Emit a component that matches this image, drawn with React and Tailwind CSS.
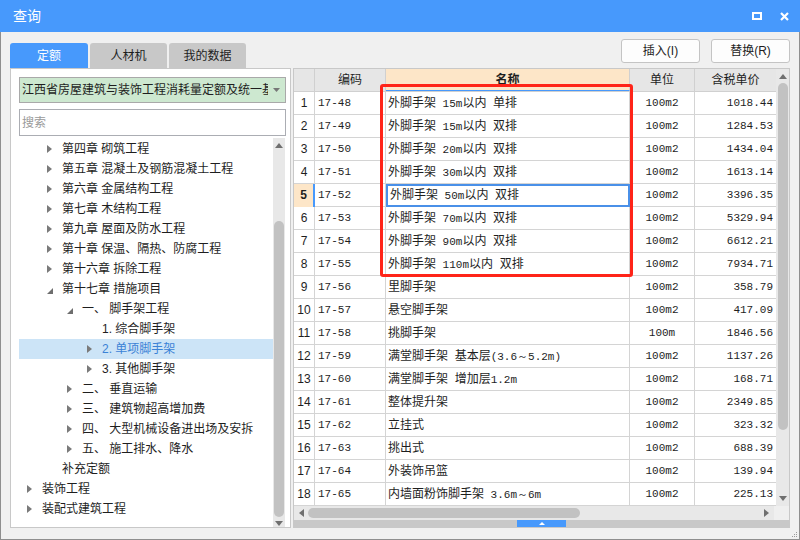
import React from "react";
import clsx from "clsx";

const tree = [
  { lv: 1, ic: "r", t: "第四章 砌筑工程" },
  { lv: 1, ic: "r", t: "第五章 混凝土及钢筋混凝土工程" },
  { lv: 1, ic: "r", t: "第六章 金属结构工程" },
  { lv: 1, ic: "r", t: "第七章 木结构工程" },
  { lv: 1, ic: "r", t: "第九章 屋面及防水工程" },
  { lv: 1, ic: "r", t: "第十章 保温、隔热、防腐工程" },
  { lv: 1, ic: "r", t: "第十六章 拆除工程" },
  { lv: 1, ic: "d", t: "第十七章 措施项目" },
  { lv: 2, ic: "d", t: "一、 脚手架工程" },
  { lv: 3, ic: "", t: "1. 综合脚手架" },
  { lv: 3, ic: "r", t: "2. 单项脚手架", sel: true },
  { lv: 3, ic: "r", t: "3. 其他脚手架" },
  { lv: 2, ic: "r", t: "二、 垂直运输" },
  { lv: 2, ic: "r", t: "三、 建筑物超高增加费" },
  { lv: 2, ic: "r", t: "四、 大型机械设备进出场及安拆" },
  { lv: 2, ic: "r", t: "五、 施工排水、降水" },
  { lv: 1, ic: "", t: "补充定额" },
  { lv: 0, ic: "r", t: "装饰工程" },
  { lv: 0, ic: "r", t: "装配式建筑工程" },
];

const pads = ["pl-[8px]", "pl-[28px]", "pl-[48px]", "pl-[68px]"];

const rows = [
  ["17-48", "外脚手架 15m以内 单排", "100m2", "1018.44"],
  ["17-49", "外脚手架 15m以内 双排", "100m2", "1284.53"],
  ["17-50", "外脚手架 20m以内 双排", "100m2", "1434.04"],
  ["17-51", "外脚手架 30m以内 双排", "100m2", "1613.14"],
  ["17-52", "外脚手架 50m以内 双排", "100m2", "3396.35"],
  ["17-53", "外脚手架 70m以内 双排", "100m2", "5329.94"],
  ["17-54", "外脚手架 90m以内 双排", "100m2", "6612.21"],
  ["17-55", "外脚手架 110m以内 双排", "100m2", "7934.71"],
  ["17-56", "里脚手架", "100m2", "358.79"],
  ["17-57", "悬空脚手架", "100m2", "417.09"],
  ["17-58", "挑脚手架", "100m", "1846.56"],
  ["17-59", "满堂脚手架 基本层(3.6～5.2m)", "100m2", "1137.26"],
  ["17-60", "满堂脚手架 增加层1.2m", "100m2", "168.71"],
  ["17-61", "整体提升架", "100m2", "2349.85"],
  ["17-62", "立挂式", "100m2", "323.32"],
  ["17-63", "挑出式", "100m2", "688.39"],
  ["17-64", "外装饰吊篮", "100m2", "139.94"],
  ["17-65", "内墙面粉饰脚手架 3.6m～6m", "100m2", "225.13"],
];

const cols = "grid grid-cols-[21px_71px_244px_65px_81px]";

// ascii parts of the name render narrower, like the bitmap font in the original
function Name({ text }) {
  return (
    <span className="whitespace-pre">
      {text.split(/([\x20-\x7e～]+)/).map((p, i) =>
        /^[\x20-\x7e～]+$/.test(p) ? (
          <span key={i} className="font-['Liberation_Mono',monospace] text-[11px]">{p}</span>
        ) : (
          <span key={i}>{p}</span>
        )
      )}
    </span>
  );
}

function Tri({ ic }) {
  if (ic === "r")
    return (
      <svg width="5" height="8" viewBox="0 0 5 8"><polygon points="0,0 5,4 0,8" fill="#7a7a7a" /></svg>
    );
  if (ic === "d")
    return (
      <svg width="6" height="6" viewBox="0 0 6 6" className="mt-[3px]"><polygon points="6,0 6,6 0,6" fill="#6e6e6e" /></svg>
    );
  return null;
}

export default function App() {
  return (
    <div className="w-[800px] h-[540px] flex flex-col font-['Liberation_Sans','Noto_Sans_CJK_SC',sans-serif] text-[12px] text-[#1e1e1e] select-none">
      {/* title bar */}
      <div className="h-[32px] shrink-0 bg-[#4799fc] flex items-center pl-[13px] pr-[10px]">
        <span className="text-white text-[14px] flex-1">查询</span>
        <div className="w-[10px] h-[8px] border-2 border-white mr-[18px]" />
        <svg width="9" height="9" viewBox="0 0 9 9" className="mr-[1px]">
          <path d="M1 1L8 8M8 1L1 8" stroke="white" strokeWidth="2.2" />
        </svg>
      </div>

      <div className="flex-1 flex flex-col bg-[#f0f0f0] border-x border-b border-[#8e8e8e] relative">
        {/* tabs + buttons */}
        <div className="h-[36px] shrink-0 flex justify-between px-[9px]">
          <div className="flex items-end gap-[2px]">
            <div className="w-[78px] h-[25px] rounded-t-[3px] bg-[#4799fc] text-white flex items-center justify-center">定额</div>
            <div className="w-[77px] h-[25px] rounded-t-[3px] bg-[#c8c8c8] flex items-center justify-center">人材机</div>
            <div className="w-[77px] h-[25px] rounded-t-[3px] bg-[#c8c8c8] flex items-center justify-center">我的数据</div>
          </div>
          <div className="flex gap-[11px] pt-[7px]">
            <button className="w-[79px] h-[24px] bg-[#fdfdfd] border border-[#c4c4c4] rounded-[3px]">插入(I)</button>
            <button className="w-[79px] h-[24px] bg-[#fdfdfd] border border-[#c4c4c4] rounded-[3px]">替换(R)</button>
          </div>
        </div>

        <div className="h-[460px] shrink-0 flex gap-[2px] px-[9px]">
          {/* left panel */}
          <div className="w-[281px] bg-white border border-[#c8c8c8] flex flex-col">
            <div className="mt-[8px] ml-[8px] w-[267px] h-[26px] bg-[#cde8d0] border border-[#a9a9a9] flex items-center pl-[2px]">
              <span className="flex-1 overflow-hidden whitespace-nowrap">江西省房屋建筑与装饰工程消耗量定额及统一基价表</span>
              <svg width="7" height="4" viewBox="0 0 7 4" className="mx-[5px] shrink-0"><polygon points="0,0 7,0 3.5,4" fill="#777" /></svg>
            </div>
            <div className="mt-[6px] ml-[8px] w-[267px] h-[27px] border border-[#abadb3] flex items-center pl-[2px] text-[#9a9a9a]">搜索</div>
            <div className="mt-[2px] flex-1 flex min-h-0">
              <div className="flex-1 pl-[8px] pt-[1px] overflow-hidden">
                {tree.map((n, i) => (
                  <div key={i} className={clsx("h-[20px] flex items-center whitespace-nowrap", pads[n.lv], n.sel && "bg-[#cce4f7] text-[#3b82d6]")}>
                    <span className="w-[15px] shrink-0 flex items-center"><Tri ic={n.ic} /></span>
                    <span>{n.t}</span>
                  </div>
                ))}
              </div>
              <div className="w-[12px] mr-[5px] bg-[#e8e8e8] flex flex-col items-center">
                <svg width="8" height="5" viewBox="0 0 8 5" className="mt-[5px]"><polygon points="0,5 8,5 4,0" fill="#6f6f6f" /></svg>
                <div className="w-[10px] mt-[73px] h-[296px] rounded-full bg-[#c2c2c2]" />
                <svg width="8" height="5" viewBox="0 0 8 5" className="mt-[4px]"><polygon points="0,0 8,0 4,5" fill="#6f6f6f" /></svg>
              </div>
            </div>
          </div>

          {/* right table */}
          <div className="w-[497px] border border-[#c8c8c8] bg-white flex flex-col relative">
            <div className="flex h-[437px]">
              <div className="w-[482px]">
                <div className={clsx(cols, "h-[23px] bg-[#e6e6e6] border-b border-[#d0d0d0] text-center")}>
                  <div className="border-r border-[#d0d0d0]" />
                  <div className="border-r border-[#d0d0d0] flex items-center justify-center">编码</div>
                  <div className="border-r border-[#d0d0d0] bg-[#fde6c8] border-b border-b-[#4799fc] flex items-center justify-center font-bold">名称</div>
                  <div className="border-r border-[#d0d0d0] flex items-center justify-center">单位</div>
                  <div className="flex items-center justify-center">含税单价</div>
                </div>
                {rows.map((r, i) => {
                  const sel = i === 4;
                  return (
                    <div key={i} className={clsx(cols, "h-[23px] border-b border-[#d4d4d4]")}>
                      <div className={clsx("border-r flex items-center justify-center", sel ? "bg-[#fde6c8] font-bold border-[#4799fc] border-r-2" : "border-[#d4d4d4]")}>{i + 1}</div>
                      <div className="border-r border-[#d4d4d4] flex items-center pl-[3px] font-['Liberation_Mono',monospace] text-[11px]">{r[0]}</div>
                      <div className={clsx("flex items-center pl-[2px] whitespace-nowrap", sel ? "border-2 border-[#4a90e8]" : "border-r border-[#d4d4d4]")}>
                        <Name text={r[1]} />
                      </div>
                      <div className="border-r border-[#d4d4d4] flex items-center justify-center font-['Liberation_Mono',monospace] text-[11px]">{r[2]}</div>
                      <div className="flex items-center justify-end pr-[3px] font-['Liberation_Mono',monospace] text-[11px]">{r[3]}</div>
                    </div>
                  );
                })}
              </div>
              <div className="w-[15px] bg-[#e8e8e8] flex flex-col items-center">
                <svg width="8" height="5" viewBox="0 0 8 5" className="mt-[5px]"><polygon points="0,5 8,5 4,0" fill="#6f6f6f" /></svg>
                <div className="w-[10px] mt-[4px] h-[347px] rounded-full bg-[#c2c2c2]" />
                <svg width="8" height="5" viewBox="0 0 8 5" className="mt-[66px]"><polygon points="0,0 8,0 4,5" fill="#6f6f6f" /></svg>
              </div>
            </div>
            <div className="h-[14px] flex items-center bg-[#e8e8e8]">
              <svg width="5" height="8" viewBox="0 0 5 8" className="ml-[5px]"><polygon points="5,0 5,8 0,4" fill="#6f6f6f" /></svg>
              <div className="ml-[4px] w-[272px] h-[10px] rounded-full bg-[#c2c2c2]" />
              <div className="flex-1" />
              <svg width="5" height="8" viewBox="0 0 5 8" className="mr-[5px]"><polygon points="0,0 5,4 0,8" fill="#6f6f6f" /></svg>
              <div className="w-[15px] h-full bg-[#efefef]" />
            </div>
            <div className="h-[7px] bg-[#c8c8c8] flex justify-center">
              <div className="w-[49px] h-full bg-[#4799fc] flex items-center justify-center">
                <svg width="6" height="3" viewBox="0 0 6 3"><polygon points="0,3 6,3 3,0" fill="white" /></svg>
              </div>
            </div>

            {/* red highlight box */}
            <div className="absolute left-[86px] top-[15px] w-[253px] h-[193px] border-[3px] border-[#ff2418] rounded-[3px] pointer-events-none" />
          </div>
        </div>

        {/* resize grip */}
        <div className="absolute right-[2px] bottom-[2px] grid grid-cols-3 gap-[1px]">
          {[0, 0, 1, 0, 1, 1, 1, 1, 1].map((v, i) => (
            <div key={i} className={clsx("w-[1px] h-[1px]", v ? "bg-[#9a9a9a]" : "")} />
          ))}
        </div>
      </div>
    </div>
  );
}
